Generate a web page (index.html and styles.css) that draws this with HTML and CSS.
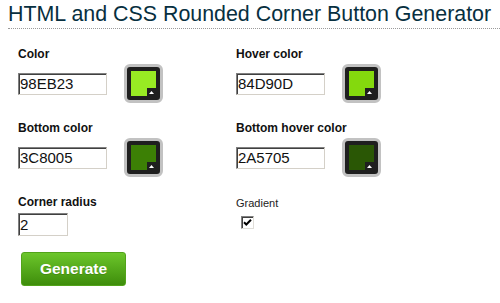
FILE: index.html
```html
<!DOCTYPE html>
<html>
<head>
<meta charset="utf-8">
<link rel="stylesheet" href="styles.css">
</head>
<body>
<h1 class="title">HTML and CSS Rounded Corner Button Generator</h1>
<div class="form">
  <div class="field">
    <label class="label">Color</label>
    <div class="row">
      <input class="text" type="text" value="98EB23">
      <div class="swatch"><div class="chip c1"><span class="notch"><svg width="5" height="3" viewBox="0 0 5 3"><path d="M0 3L2.5 0L5 3Z" fill="#fff"/></svg></span></div></div>
    </div>
  </div>
  <div class="field">
    <label class="label">Hover color</label>
    <div class="row">
      <input class="text" type="text" value="84D90D">
      <div class="swatch"><div class="chip c2"><span class="notch"><svg width="5" height="3" viewBox="0 0 5 3"><path d="M0 3L2.5 0L5 3Z" fill="#fff"/></svg></span></div></div>
    </div>
  </div>
  <div class="field">
    <label class="label">Bottom color</label>
    <div class="row">
      <input class="text" type="text" value="3C8005">
      <div class="swatch"><div class="chip c3"><span class="notch"><svg width="5" height="3" viewBox="0 0 5 3"><path d="M0 3L2.5 0L5 3Z" fill="#fff"/></svg></span></div></div>
    </div>
  </div>
  <div class="field">
    <label class="label">Bottom hover color</label>
    <div class="row">
      <input class="text" type="text" value="2A5705">
      <div class="swatch"><div class="chip c4"><span class="notch"><svg width="5" height="3" viewBox="0 0 5 3"><path d="M0 3L2.5 0L5 3Z" fill="#fff"/></svg></span></div></div>
    </div>
  </div>
  <div class="field">
    <label class="label">Corner radius</label>
    <input class="text small" type="text" value="2">
  </div>
  <div class="field">
    <label class="label plain">Gradient</label>
    <span class="check"><svg width="9" height="9" viewBox="0 0 9 9"><path d="M1 4.2L3.3 6.5L8 1.8" fill="none" stroke="#000" stroke-width="2"/></svg></span>
  </div>
</div>
<button class="generate">Generate</button>
</body>
</html>
```

FILE: styles.css
```css
html, body {
  margin: 0;
  padding: 0;
  background: #fff;
}
body {
  font-family: "Liberation Sans", Arial, sans-serif;
  color: #000;
  width: 500px;
  height: 303px;
  overflow: hidden;
}
.title {
  margin: 2px 0 0 8px;
  padding: 0 0 2px 0;
  font-size: 21.4px;
  line-height: 24px;
  font-weight: normal;
  color: #072f40;
  border-bottom: 1px dotted #9a9a9a;
  white-space: nowrap;
}
.form {
  display: grid;
  grid-template-columns: 218px 218px;
  row-gap: 18px;
  margin: 18px 0 0 18px;
}
.field {
  display: flex;
  flex-direction: column;
  align-items: flex-start;
}
.label {
  display: block;
  font-size: 12px;
  line-height: 14px;
  font-weight: bold;
  color: #111;
}
.label.plain {
  font-weight: normal;
  font-size: 11px;
  padding-top: 1px;
  color: #222;
}
.row {
  display: flex;
  align-items: center;
  gap: 17px;
  margin-top: 3px;
}
.text {
  box-sizing: border-box;
  width: 89px;
  height: 22px;
  margin: 0;
  padding: 0 0 0 1px;
  font-family: "Liberation Sans", Arial, sans-serif;
  font-size: 15px;
  color: #111;
  background: #fff;
  border-top: 1px solid #808080;
  border-left: 1px solid #808080;
  border-right: 1px solid #d4d0c8;
  border-bottom: 1px solid #d4d0c8;
  box-shadow: inset 1px 1px 0 #404040;
  outline: none;
}
.text.small {
  width: 50px;
  height: 23px;
  margin-top: 4px;
}
.swatch {
  box-sizing: border-box;
  width: 39px;
  height: 39px;
  border: 3px solid #c2c2c2;
  border-radius: 6px;
  background: #1f1f1f;
  padding: 4px;
}
.chip {
  position: relative;
  width: 25px;
  height: 25px;
}
.c1 { background: #98eb23; }
.c2 { background: #84d90d; }
.c3 { background: #3c8005; }
.c4 { background: #2a5705; }
.notch {
  position: absolute;
  right: 0;
  bottom: 0;
  width: 9px;
  height: 8px;
  background: #1f1f1f;
  display: flex;
  align-items: center;
  justify-content: center;
}
.check {
  box-sizing: border-box;
  display: flex;
  align-items: center;
  justify-content: center;
  width: 13px;
  height: 13px;
  margin: 6px 0 0 5px;
  background: #fff;
  border-top: 1px solid #808080;
  border-left: 1px solid #808080;
  border-right: 1px solid #e0ded8;
  border-bottom: 1px solid #e0ded8;
  box-shadow: inset 1px 1px 0 #404040;
}
.generate {
  display: block;
  box-sizing: border-box;
  width: 105px;
  height: 34px;
  margin: 16px 0 0 21px;
  padding: 0;
  border: 1px solid #52a31a;
  border-radius: 3px;
  background: linear-gradient(#6cc62b, #3e8d0b);
  color: #fff;
  font-family: "Liberation Sans", Arial, sans-serif;
  font-weight: bold;
  font-size: 15.5px;
  text-shadow: 0 1px 0 rgba(0,0,0,0.15);
}
```
